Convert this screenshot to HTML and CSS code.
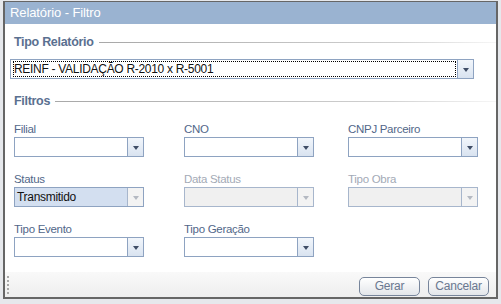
FILE: index.html
```html
<!DOCTYPE html>
<html lang="pt-BR">
<head>
  <meta charset="UTF-8" />
  <title>Relatório - Filtro</title>
  <link rel="stylesheet" href="styles.css">
</head>
<body>

<div class="window">
  <div class="titlebar">Relatório - Filtro</div>

  <div class="content">
    <div class="legend"><span>Tipo Relatório</span><i class="rule"></i></div>

    <div class="combo wide">
      <div class="combo-text"><span class="focus">REINF - VALIDAÇÃO R-2010 x R-5001</span></div>
      <div class="combo-btn"><i class="arrow"></i></div>
    </div>

    <div class="legend filtros"><span>Filtros</span><i class="rule"></i></div>

    <div class="fields">
      <div class="field">
        <label>Filial</label>
        <div class="combo"><div class="combo-text"></div><div class="combo-btn"><i class="arrow"></i></div></div>
      </div>
      <div class="field">
        <label>CNO</label>
        <div class="combo"><div class="combo-text"></div><div class="combo-btn"><i class="arrow"></i></div></div>
      </div>
      <div class="field">
        <label>CNPJ Parceiro</label>
        <div class="combo"><div class="combo-text"></div><div class="combo-btn"><i class="arrow"></i></div></div>
      </div>

      <div class="field">
        <label>Status</label>
        <div class="combo selected"><div class="combo-text">Transmitido</div><div class="combo-btn"><i class="arrow"></i></div></div>
      </div>
      <div class="field disabled">
        <label>Data Status</label>
        <div class="combo"><div class="combo-text"></div><div class="combo-btn"><i class="arrow"></i></div></div>
      </div>
      <div class="field disabled">
        <label>Tipo Obra</label>
        <div class="combo"><div class="combo-text"></div><div class="combo-btn"><i class="arrow"></i></div></div>
      </div>

      <div class="field">
        <label>Tipo Evento</label>
        <div class="combo"><div class="combo-text"></div><div class="combo-btn"><i class="arrow"></i></div></div>
      </div>
      <div class="field">
        <label>Tipo Geração</label>
        <div class="combo"><div class="combo-text"></div><div class="combo-btn"><i class="arrow"></i></div></div>
      </div>
    </div>
  </div>

  <div class="footer">
    <div class="grip"></div>
    <div class="buttons">
      <button>Gerar</button>
      <button>Cancelar</button>
    </div>
  </div>
</div>

</body>
</html>
```

FILE: styles.css
```css
* {
  box-sizing: border-box;
}

body {
  margin: 0;
  font-family: 'Liberation Sans', Arial, sans-serif;
  font-size: 11.5px;
  letter-spacing: -0.3px;
  background: #e6e8ec;
  height: 304px;
  overflow: hidden;
}

.window {
  margin: 1px 0 0 3px;
  width: 495px;
  height: 298px;
  border: 2px solid #666;
  border-top-width: 1px;
  background: #fff;
  display: flex;
  flex-direction: column;
}

.titlebar {
  height: 22px;
  line-height: 22px;
  padding-left: 5px;
  background: #9ab3d1;
  color: #fff;
  font-size: 13px;
  letter-spacing: -0.1px;
}

.content {
  flex: 1;
  padding: 10px 0 0 5px;
}

/* fieldset legends */
.legend {
  display: flex;
  align-items: center;
  height: 16px;
  padding-left: 4px;
  color: #5a7090;
  font-size: 12.5px;
  font-weight: bold;
  letter-spacing: -0.3px;
}

.legend .rule {
  flex: 1;
  height: 1px;
  margin-left: 5px;
  background: linear-gradient(to right, #a8a8a8, #d0d0d0 75%, #f6f6f6);
}

.legend.filtros {
  margin-top: 14px;
}

/* combos */
.combo {
  display: flex;
  width: 130px;
  height: 20px;
  border: 1px solid #8ea3c1;
  background: #fff;
}

.combo.wide {
  width: 464px;
  margin-top: 9px;
}

.combo-text {
  flex: 1;
  padding: 1px 2px;
  line-height: 16px;
  color: #111;
  font-size: 12px;
  white-space: nowrap;
  overflow: hidden;
}

.combo .focus {
  display: block;
  width: 443px;
  height: 16px;
  padding-left: 1px;
  outline: 1px dotted #000;
  outline-offset: -1px;
}

.combo-btn {
  width: 16px;
  border-left: 1px solid #8ea3c1;
  background: linear-gradient(#f2f6fb, #d9e3f0);
  display: flex;
  align-items: center;
  justify-content: center;
}

.arrow {
  width: 0;
  height: 0;
  margin-top: 1px;
  border-left: 3.5px solid transparent;
  border-right: 3.5px solid transparent;
  border-top: 4px solid #3f4d66;
}

.combo.selected {
  background: #d3dff0;
}

.combo.selected .arrow,
.disabled .arrow {
  border-top-color: #b4b9c2;
}

.combo.selected .combo-btn,
.disabled .combo-btn {
  background: #f3f3f3;
  border-left-color: #a7b6cc;
}

.disabled .combo {
  background: #f0f0f0;
  border-color: #a7b6cc;
}

/* field grid */
.fields {
  display: grid;
  grid-template-columns: 170px 164px 130px;
  row-gap: 15px;
  margin-top: 13px;
  padding-left: 4px;
}

.field label {
  display: block;
  height: 15px;
  line-height: 14px;
  color: #526789;
}

.field.disabled label {
  color: #a3aab6;
}

/* footer */
.footer {
  height: 25px;
  display: flex;
  align-items: center;
  justify-content: space-between;
  padding: 0 7px 0 2px;
  background: linear-gradient(#f9f9f9, #eeeeee);
}

.grip {
  width: 2px;
  height: 18px;
  background: repeating-linear-gradient(#a8a8a8 0 2px, transparent 2px 4px);
}

.buttons {
  display: flex;
  gap: 8px;
  padding-top: 3px;
}

.buttons button {
  width: 61px;
  height: 19px;
  padding: 0;
  border: 1px solid #77859b;
  border-radius: 5px;
  background: linear-gradient(#ffffff, #e3e6ea);
  color: #6a7890;
  font-family: 'Liberation Sans', Arial, sans-serif;
  font-size: 12px;
  letter-spacing: -0.2px;
}
```
